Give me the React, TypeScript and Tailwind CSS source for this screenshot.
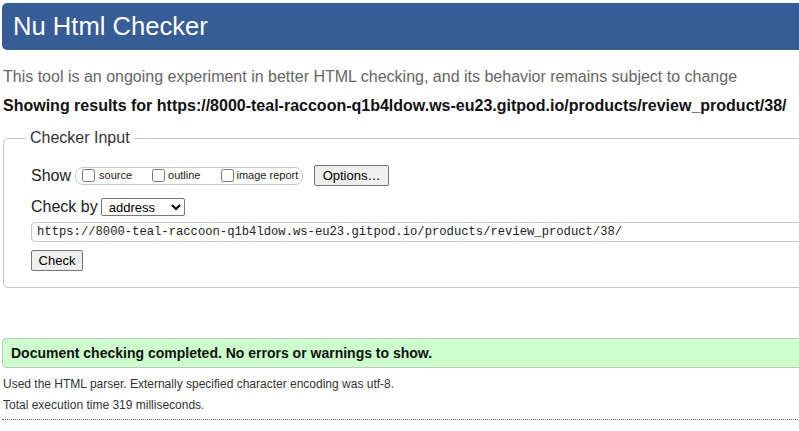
const url = 'https://8000-teal-raccoon-q1b4ldow.ws-eu23.gitpod.io/products/review_product/38/';

export default function App() {
  return (
    <div className="w-[799px] h-[431px] overflow-hidden bg-white font-['Liberation_Sans',Arial,sans-serif] text-[#222]">
      <header className="mt-[3px] ml-[2px] w-[830px] h-[47px] rounded-[5px] bg-[#365d96] pl-[11px] flex items-center">
        <h1 className="text-[25.6px] leading-none text-white font-normal">Nu Html Checker</h1>
      </header>

      <p className="mt-[17px] pl-[3px] text-[16px] leading-[20px] text-[#666] whitespace-nowrap">
        This tool is an ongoing experiment in better HTML checking, and its behavior remains subject to change
      </p>
      <p className="mt-[9px] pl-[3px] text-[16px] leading-[20px] font-bold text-[#111] whitespace-nowrap">
        Showing results for {url}
      </p>

      <fieldset className="mt-[12px] ml-[3px] w-[830px] border border-[#c8c8c8] rounded-[5px] pl-[27px] pb-[16px]">
        <legend className="-ml-[5px] px-[4px] text-[16px] leading-[20px] text-[#333]">Checker Input</legend>

        <div className="mt-[17px] h-[21px] flex items-center">
          <span className="text-[16px] leading-[20px]">Show</span>
          <div className="ml-[4px] h-[18px] w-[228px] border border-[#c8c8c8] rounded-[8px] flex items-center pl-[6px] text-[11px] text-[#222]">
            <label className="flex items-center">
              <input type="checkbox" className="m-0 w-[13px] h-[13px]" />
              <span className="ml-[4px]">source</span>
            </label>
            <label className="ml-[20px] flex items-center">
              <input type="checkbox" className="m-0 w-[13px] h-[13px]" />
              <span className="ml-[3px]">outline</span>
            </label>
            <label className="ml-[21px] flex items-center">
              <input type="checkbox" className="m-0 w-[13px] h-[13px]" />
              <span className="ml-[2px]">image report</span>
            </label>
          </div>
          <button className="ml-[11px] w-[75px] h-[21px] bg-[#efefef] border border-[#767676] rounded-[2px] text-[13px] text-black">
            Options…
          </button>
        </div>

        <div className="mt-[11px] h-[20px] flex items-center">
          <span className="text-[16px] leading-[20px]">Check by</span>
          <select className="ml-[3px] w-[84px] h-[18px] border border-[#767676] rounded-[2px] text-[13px] text-black pl-[3px] bg-white">
            <option>address</option>
          </select>
        </div>

        <div className="mt-[5px] h-[20px] w-[800px] border border-[#c8c8c8] rounded-[4px] flex items-center pl-[5px]">
          <span className="font-['Liberation_Mono','DejaVu_Sans_Mono',monospace] text-[12.2px] text-[#222] whitespace-nowrap">{url}</span>
        </div>

        <button className="mt-[8px] block w-[52px] h-[21px] bg-[#efefef] border border-[#767676] rounded-[2px] text-[13px] text-black">
          Check
        </button>
      </fieldset>

      <div className="mt-[50px] ml-[2px] w-[830px] h-[30px] bg-[#ccffcc] border border-[#c4c4c4] rounded-[4px] flex items-center pl-[8px]">
        <p className="text-[14px] font-bold text-[#111] whitespace-nowrap">
          Document checking completed. No errors or warnings to show.
        </p>
      </div>

      <p className="mt-[6px] pl-[3px] text-[12px] leading-[20px] text-[#333] whitespace-nowrap">
        Used the HTML parser. Externally specified character encoding was utf-8.
      </p>
      <p className="mt-[1px] pl-[3px] text-[12px] leading-[20px] text-[#333] whitespace-nowrap">
        Total execution time 319 milliseconds.
      </p>
      <div className="mt-[4px] ml-[2px] w-[830px] border-t border-dotted border-[#666]" />
    </div>
  );
}
